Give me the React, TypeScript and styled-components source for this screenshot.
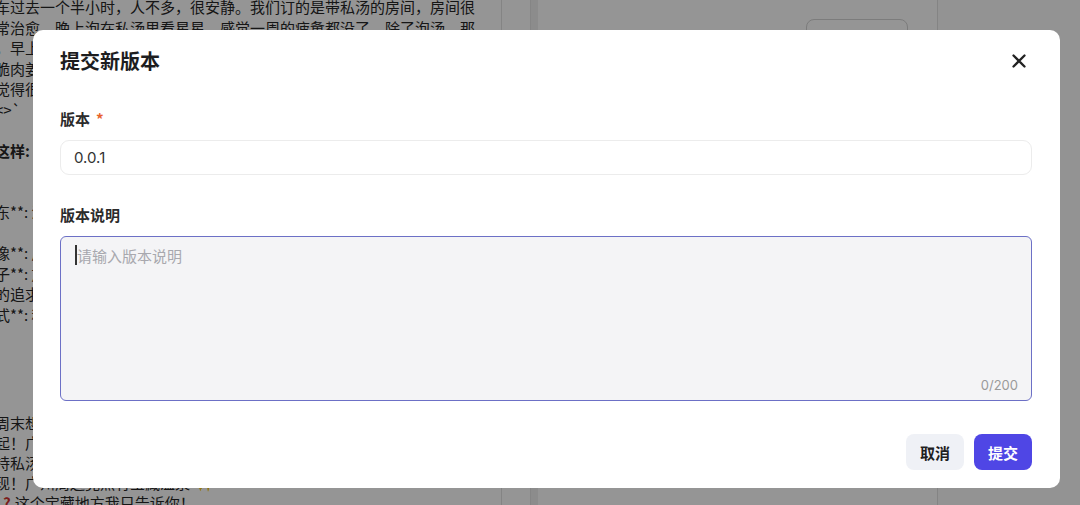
import styled, { createGlobalStyle } from "styled-components";

const GlobalStyle = createGlobalStyle`
  * { box-sizing: border-box; }
  html, body { margin: 0; padding: 0; }
  body {
    font-family: Inter, "Noto Sans CJK SC", sans-serif;
    background: #fff;
    overflow: hidden;
  }
`;

const Page = styled.div`
  display: flex;
  width: 1080px;
  height: 505px;
  overflow: hidden;
  background: #fff;
`;

const Article = styled.div`
  width: 502px;
  flex-shrink: 0;
  border-right: 1px solid #e2e2e2;
  overflow: hidden;
  font-family: "Noto Sans CJK SC", sans-serif;
  font-size: 15px;
  color: #262626;
`;

const Block = styled.div<{ $lh: number; $mt: number }>`
  margin-top: ${(p) => p.$mt}px;
  margin-left: -5px;
  line-height: ${(p) => p.$lh}px;
`;

const Line = styled.div<{ $bold?: boolean }>`
  white-space: nowrap;
  font-weight: ${(p) => (p.$bold ? 700 : 400)};
`;

const Red = styled.span`
  color: #d3302f;
  font-weight: 700;
  margin: 0 4px;
`;

const Gold = styled.span`
  color: #e0b23a;
  margin-left: 6px;
`;

const Gutter = styled.div`
  width: 28px;
  flex-shrink: 0;
`;

const Track = styled.div`
  width: 8px;
  flex-shrink: 0;
  background: #efefef;
  border-left: 1px solid #e4e4e4;
`;

const Middle = styled.div`
  width: 400px;
  flex-shrink: 0;
  border-right: 1px solid #e2e2e2;
  display: flex;
  justify-content: flex-end;
  align-items: flex-start;
  padding: 19px 29px 0 0;
`;

const GhostButton = styled.div`
  width: 102px;
  height: 34px;
  border: 1px solid #d4d4d4;
  border-radius: 8px;
`;

const Side = styled.div`
  flex: 1;
  background: #fbfbfb;
`;

const Overlay = styled.div`
  position: fixed;
  inset: 0;
  background: rgba(0, 0, 0, 0.415);
  display: flex;
  align-items: flex-start;
  padding: 30px 0 0 33px;
`;

const Modal = styled.div`
  width: 1027px;
  height: 458px;
  background: #fff;
  border-radius: 10px;
  padding: 20px 28px 18px 27px;
  display: flex;
  flex-direction: column;
`;

const Header = styled.div`
  display: flex;
  justify-content: space-between;
  align-items: center;
  height: 22px;
`;

const Title = styled.h2`
  margin: 0;
  font-family: "Noto Sans CJK SC", sans-serif;
  font-size: 20px;
  line-height: 22px;
  font-weight: 700;
  color: #1d1d1f;
`;

const CloseButton = styled.button`
  width: 20px;
  height: 20px;
  margin-right: 3px;
  padding: 0;
  border: none;
  background: none;
  display: flex;
  align-items: center;
  justify-content: center;
  color: #222;
  cursor: pointer;
`;

const Field = styled.div<{ $mt: number }>`
  margin-top: ${(p) => p.$mt}px;
  display: flex;
  flex-direction: column;
`;

const Label = styled.label`
  font-family: "Noto Sans CJK SC", sans-serif;
  font-size: 15px;
  line-height: 22px;
  font-weight: 600;
  color: #2b2b2b;
  margin-bottom: 10px;
  span {
    color: #e8642c;
    margin-left: 6px;
  }
`;

const Input = styled.input`
  height: 35px;
  border: 1px solid #ececec;
  border-radius: 9px;
  padding: 0 13px;
  font-family: Inter, "Noto Sans CJK SC", sans-serif;
  font-size: 15px;
  color: #333;
  background: #fff;
  outline: none;
`;

const AreaWrap = styled.div`
  position: relative;
  height: 165px;
`;

const TextArea = styled.textarea`
  width: 100%;
  height: 100%;
  border: 1px solid #6c70c6;
  border-radius: 6px;
  background: #f4f4f6;
  padding: 8px 16px;
  font-family: "Noto Sans CJK SC", sans-serif;
  font-size: 15px;
  line-height: 22px;
  color: #333;
  resize: none;
  outline: none;
  &::placeholder {
    color: #a8a8ae;
  }
`;

const Caret = styled.span`
  position: absolute;
  left: 15px;
  top: 9px;
  width: 1.5px;
  height: 20px;
  background: #333;
`;

const Counter = styled.span`
  position: absolute;
  right: 14px;
  bottom: 8px;
  font-size: 13px;
  line-height: 16px;
  color: #9a9a9a;
`;

const Footer = styled.div`
  margin-top: auto;
  display: flex;
  justify-content: flex-end;
  gap: 10px;
`;

const Button = styled.button<{ $primary?: boolean }>`
  width: 58px;
  height: 36px;
  border: none;
  border-radius: 8px;
  font-family: "Noto Sans CJK SC", sans-serif;
  font-size: 15px;
  font-weight: 700;
  cursor: pointer;
  background: ${(p) => (p.$primary ? "#4f46e5" : "#eff1f6")};
  color: ${(p) => (p.$primary ? "#fff" : "#1f1f1f")};
`;

const topLines: { t: string; bold?: boolean }[] = [
  { t: "车过去一个半小时，人不多，很安静。我们订的是带私汤的房间，房间很" },
  { t: "常治愈，晚上泡在私汤里看星星，感觉一周的疲惫都没了。除了泡汤，那" },
  { t: "，早上的自助早餐也很丰富，" },
  { t: "脆肉姜撞奶也很好吃，" },
  { t: "觉得很值得再来一次。" },
  { t: "<>`" },
  { t: "" },
  { t: "这样:", bold: true },
  { t: "" },
  { t: "" },
  { t: "东**: 温泉酒店" },
  { t: "" },
  { t: "像**: 周末出游" },
  { t: "子**: 放松身心" },
  { t: "的追求" },
  { t: "式**: 种草文案" },
  { t: "" },
  { t: "" },
  { t: "" },
  { t: "" },
];

const CloseIcon = () => (
  <svg width="14" height="14" viewBox="0 0 14 14" fill="none">
    <path
      d="M1.5 1.5L12.5 12.5M12.5 1.5L1.5 12.5"
      stroke="currentColor"
      strokeWidth="2.3"
      strokeLinecap="round"
    />
  </svg>
);

const App = () => (
  <>
    <GlobalStyle />
    <Page>
      <Article>
        <Block $lh={20.5} $mt={-3}>
          {topLines.map((l, i) => (
            <Line key={i} $bold={l.bold}>
              {l.t || "\u00a0"}
            </Line>
          ))}
        </Block>
        <Block $lh={20} $mt={6}>
          <Line>周末想去哪里放松一下？</Line>
          <Line>起！广州周边的温泉推荐</Line>
          <Line>持私汤的房间，超级安静</Line>
          <Line>
            现！广州周边竟然有宝藏温泉<Gold>✨</Gold>
          </Line>
          <Line>
            |<Red>?</Red>这个宝藏地方我只告诉你！
          </Line>
        </Block>
      </Article>
      <Gutter />
      <Track />
      <Middle>
        <GhostButton />
      </Middle>
      <Side />
    </Page>
    <Overlay>
      <Modal>
        <Header>
          <Title>提交新版本</Title>
          <CloseButton aria-label="关闭">
            <CloseIcon />
          </CloseButton>
        </Header>
        <Field $mt={36}>
          <Label>
            版本<span>*</span>
          </Label>
          <Input defaultValue="0.0.1" />
        </Field>
        <Field $mt={29}>
          <Label>版本说明</Label>
          <AreaWrap>
            <TextArea placeholder="请输入版本说明" maxLength={200} />
            <Caret />
            <Counter>0/200</Counter>
          </AreaWrap>
        </Field>
        <Footer>
          <Button>取消</Button>
          <Button $primary>提交</Button>
        </Footer>
      </Modal>
    </Overlay>
  </>
);

export default App;
